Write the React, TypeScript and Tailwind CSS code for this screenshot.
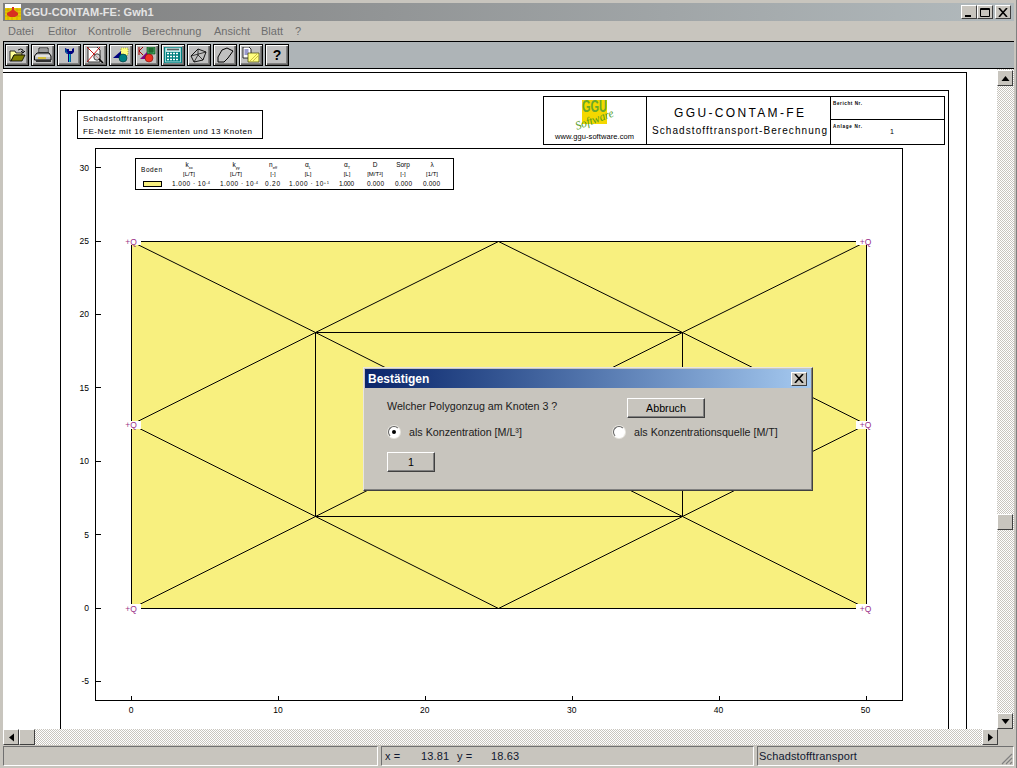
import React from 'react'

const UI = "font-['Liberation_Sans',Arial,sans-serif]"
const raised = 'border border-t-white border-l-white border-r-[#404040] border-b-[#404040] bg-[#c8c5be]'
const checker = '[background:repeating-conic-gradient(#ffffff_0_25%,#c8c5be_0_50%)_0_0/2px_2px]'

const menu = [
  { label: 'Datei', cls: 'w-[40px]' },
  { label: 'Editor', cls: 'w-[40px]' },
  { label: 'Kontrolle', cls: 'w-[54px]' },
  { label: 'Berechnung', cls: 'w-[72px]' },
  { label: 'Ansicht', cls: 'w-[47px]' },
  { label: 'Blatt', cls: 'w-[34px]' },
  { label: '?', cls: 'w-[12px]' },
]

const toolIcons: React.ReactNode[] = [
  // open folder
  <>
    <path d="M2 4h5l1 2h6v2H6L3 14H2z" fill="#ffff99" stroke="#000" strokeWidth="0.8" />
    <path d="M6 8h11l-3 6H3z" fill="#808000" stroke="#000" strokeWidth="0.8" />
    <path d="M10 3q3-2 5 0v2m-2-1l2 2 2-2" fill="none" stroke="#000" strokeWidth="0.9" />
  </>,
  // printer
  <>
    <path d="M5 1h9v5H5z" fill="#fff" stroke="#000" strokeWidth="0.9" />
    <path d="M6 3h7M6 5h7" stroke="#000" strokeWidth="0.8" />
    <path d="M3 6h12l2 3v4H0.5V9z" fill="#c0c0c0" stroke="#000" strokeWidth="1" />
    <path d="M2 9h14" stroke="#fff" strokeWidth="1" />
    <path d="M4 11h8" stroke="#e0c000" strokeWidth="1.4" />
    <path d="M2 13h15v2H2z" fill="#303030" />
  </>,
  // wrench
  <>
    <path d="M5 1v4l2 2h1v8h3V7h1l2-2V1l-2 1v2H9V2H7z" fill="#000080" />
    <path d="M9 7h1.5v8H9z" fill="#00c0c0" />
    <path d="M6 2v3l1.4 1H8" fill="none" stroke="#00a0b0" strokeWidth="0.8" />
  </>,
  // crossed sheet with lens
  <>
    <path d="M2 0h9l3 3v12H2z" fill="#fff" stroke="#000" strokeWidth="0.8" />
    <path d="M1 0l15 15M14 0L1 15" stroke="#c00000" strokeWidth="0.9" />
    <circle cx="11" cy="10" r="3.2" fill="#c0c0c0" fillOpacity="0.7" stroke="#404040" strokeWidth="1" />
    <path d="M13 12l4 4" stroke="#000" strokeWidth="1.6" />
  </>,
  // shapes
  <>
    <path d="M9 1h7v7H9z" fill="#ffff80" stroke="#808000" strokeWidth="0.6" strokeDasharray="1 1" />
    <path d="M1 11L9 4v7z" fill="#000080" />
    <circle cx="11" cy="11" r="4" fill="#008080" stroke="#003030" strokeWidth="0.6" />
  </>,
  // K with shapes
  <>
    <path d="M1 0v8M5 0L1 4l4 4" fill="none" stroke="#a00000" strokeWidth="1" />
    <path d="M9 0h8v7H9z" fill="#40a060" stroke="#004000" strokeWidth="0.6" />
    <path d="M10 2h6M10 4h6M12 1v5M14 1v5" stroke="#003000" strokeWidth="0.6" />
    <path d="M2 12l7-7v7z" fill="#800080" />
    <circle cx="11" cy="11" r="4" fill="#f03020" stroke="#600000" strokeWidth="0.5" />
  </>,
  // calculator
  <>
    <rect x="0.5" y="0" width="17" height="16" fill="#c0e8e8" stroke="#008080" strokeWidth="1.4" />
    <path d="M3 2.5h12" stroke="#606060" strokeWidth="1.6" />
    <path d="M2 5h14v9.5H2z" fill="#008080" />
    <path d="M3 6.5h12M3 9.5h12M3 12.5h12" stroke="#fff" strokeWidth="1.4" strokeDasharray="2 1" />
  </>,
  // mesh polygon
  <>
    <path d="M1 9L8 2l8 3-3 8-9 2z" fill="none" stroke="#000" strokeWidth="0.9" />
    <path d="M1 9l15-4M4 15l4-7 5 5M8 2v6" fill="none" stroke="#000" strokeWidth="0.7" />
  </>,
  // polygon
  <path d="M2 10L6 3l5-2 6 3-5 7-4 4H2z" fill="none" stroke="#000" strokeWidth="1" />,
  // sheet and folder
  <>
    <path d="M1 0h6l2 2v9H1z" fill="#fff" stroke="#000" strokeWidth="0.8" />
    <path d="M2.5 3h4M2.5 5h4M2.5 7h4" stroke="#000080" strokeWidth="0.8" />
    <path d="M6 6h11v9H6z" fill="#ffff80" stroke="#404000" strokeWidth="0.7" />
    <path d="M8 14l7-7M11 14l5-5" stroke="#d0c040" strokeWidth="1" />
  </>,
]

function ToolButton({ children }: { children: React.ReactNode }) {
  return (
    <div className="w-[24px] h-[22px] border border-black bg-[#c0c0c0] shadow-[inset_1px_1px_0_#fff,inset_-1px_-1px_0_#606060,inset_-2px_-2px_0_#808080] flex items-center justify-center">
      {children}
    </div>
  )
}

function WinButton({ children }: { children: React.ReactNode }) {
  return (
    <div className={`w-[16px] h-[14px] ${raised} flex items-center justify-center`}>
      <svg width="10" height="9" viewBox="0 0 10 9">{children}</svg>
    </div>
  )
}

function ScrollArrow({ d, className = 'w-[16px] h-[16px]' }: { d: string; className?: string }) {
  return (
    <div className={`${className} ${raised} flex items-center justify-center shrink-0`}>
      <svg width="9" height="9" viewBox="0 0 9 9">
        <path d={d} fill="#000" />
      </svg>
    </div>
  )
}

function Radio({ checked }: { checked?: boolean }) {
  return (
    <div className="w-[12px] h-[12px] rounded-full bg-white border border-t-[#606060] border-l-[#606060] border-r-white border-b-white shadow-[0_0_0_1px_#e8e6e0] flex items-center justify-center shrink-0">
      {checked && <div className="w-[4px] h-[4px] rounded-full bg-black" />}
    </div>
  )
}

function DialogButton({ label, className }: { label: string; className: string }) {
  return (
    <div className={`${className} h-[20px] border border-t-white border-l-white border-r-[#404040] border-b-[#404040] shadow-[inset_-1px_-1px_0_#808080] flex items-center justify-center text-[10.7px] text-black`}>
      {label}
    </div>
  )
}

const FONT = 'Liberation Sans, Arial, sans-serif'

function T({
  x,
  y,
  size,
  w,
  anchor = 'start',
  color = '#000',
  weight,
  children,
}: {
  x: number
  y: number
  size: number
  w?: number
  anchor?: 'start' | 'middle' | 'end'
  color?: string
  weight?: number
  children: React.ReactNode
}) {
  return (
    <text
      x={x}
      y={y}
      fontSize={size}
      fontFamily={FONT}
      textAnchor={anchor}
      fill={color}
      fontWeight={weight}
      textLength={w}
      lengthAdjust={w ? 'spacing' : undefined}
    >
      {children}
    </text>
  )
}

const sub = (s: string) => (
  <tspan fontSize="4" dy="1.5">
    {s}
  </tspan>
)
const sup = (s: string) => (
  <tspan fontSize="4" dy="-2">
    {s}
  </tspan>
)

const legendCols: { cx: number; head: React.ReactNode; unit: string; val: React.ReactNode; vx: number; vw: number }[] = [
  { cx: 189, head: <>k{sub('xx')}</>, unit: '[L/T]', val: <>1.000 · 10{sup('-4')}</>, vx: 172, vw: 38 },
  { cx: 236, head: <>k{sub('yy')}</>, unit: '[L/T]', val: <>1.000 · 10{sup('-4')}</>, vx: 220, vw: 38 },
  { cx: 273, head: <>n{sub('eff')}</>, unit: '[-]', val: '0.20', vx: 265, vw: 15 },
  { cx: 308, head: <>α{sub('L')}</>, unit: '[L]', val: <>1.000 · 10{sup('+1')}</>, vx: 289, vw: 40 },
  { cx: 347, head: <>α{sub('T')}</>, unit: '[L]', val: '1.000', vx: 339, vw: 15 },
  { cx: 375, head: 'D', unit: '[M/T²]', val: '0.000', vx: 367, vw: 17 },
  { cx: 403, head: 'Sorp', unit: '[-]', val: '0.000', vx: 395, vw: 17 },
  { cx: 432, head: 'λ', unit: '[1/T]', val: '0.000', vx: 423, vw: 17 },
]

const px = (v: number) => 131 + v * 14.69
const py = (v: number) => 608 - v * 14.68
// snap to the pixel centre so the outlines land on the same row and column as the mesh nodes
const sx = (v: number) => Math.round(px(v)) + 0.5
const sy = (v: number) => Math.floor(py(v)) + 0.5

const mesh: [number, number, number, number][] = [
  [0, 25, 12.5, 18.75],
  [12.5, 18.75, 25, 12.5],
  [25, 12.5, 37.5, 6.25],
  [37.5, 6.25, 50, 0],
  [50, 25, 37.5, 18.75],
  [37.5, 18.75, 25, 12.5],
  [25, 12.5, 12.5, 6.25],
  [12.5, 6.25, 0, 0],
  [25, 25, 12.5, 18.75],
  [25, 25, 37.5, 18.75],
  [0, 12.5, 12.5, 18.75],
  [0, 12.5, 12.5, 6.25],
  [25, 0, 12.5, 6.25],
  [25, 0, 37.5, 6.25],
  [50, 12.5, 37.5, 18.75],
  [50, 12.5, 37.5, 6.25],
]

const sources: [number, number][] = [
  [0, 25],
  [50, 25],
  [0, 12.5],
  [50, 12.5],
  [0, 0],
  [50, 0],
]

function Drawing() {
  return (
    <svg className="block w-[995px] h-[660px]" viewBox="3 69 995 660" shapeRendering="crispEdges">
      <path d="M3 72.5H966.5V729M60.5 729V90.5H948.5V729" fill="none" stroke="#000" />
      {/* title block */}
      <path d="M543.5 96.5H944.5V144.5H543.5zM646.5 96.5V144.5M830.5 96.5V144.5M830.5 119.5H944.5" fill="none" stroke="#000" />
      <rect x="582" y="100" width="25" height="24" fill="#f4d800" />
      <g shapeRendering="auto">
        <text x="594.5" y="112" fontSize="16" fontWeight={700} fontFamily={FONT} fill="#6aa82a" textAnchor="middle" textLength="25" lengthAdjust="spacingAndGlyphs">
          GGU
        </text>
        <text
          x="577"
          y="130"
          fontSize="12"
          fontStyle="italic"
          fontFamily="Liberation Serif, serif"
          fill="#4f9a20"
          textLength="40"
          lengthAdjust="spacingAndGlyphs"
          transform="rotate(-20 577 130)"
        >
          Software
        </text>
        <T x={555} y={138.5} size={7.5} w={79}>www.ggu-software.com</T>
        <T x={674} y={117} size={12} w={130}>GGU-CONTAM-FE</T>
        <T x={652} y={134} size={10} w={175}>Schadstofftransport-Berechnung</T>
        <T x={833} y={105} size={4.6} w={29} weight={700}>Bericht Nr.</T>
        <T x={833} y={128} size={4.6} w={29} weight={700}>Anlage Nr.</T>
        <T x={890} y={134} size={7}>1</T>

        <T x={83} y={121} size={8} w={80}>Schadstofftransport</T>
        <T x={83} y={134} size={8} w={169}>FE-Netz mit 16 Elementen und 13 Knoten</T>
      </g>
      <rect x="77.5" y="110.5" width="185" height="28" fill="none" stroke="#000" />

      {/* plot */}
      <rect x="95.5" y="148.5" width="807" height="552" fill="none" stroke="#000" />
      <rect x={sx(0)} y={sy(25)} width={sx(50) - sx(0)} height={sy(0) - sy(25)} fill="#f8f07f" stroke="#000" />
      <g shapeRendering="auto" stroke="#000" strokeWidth="1">
        {mesh.map(([a, b, c, d], i) => (
          <line key={i} x1={sx(a)} y1={sy(b)} x2={sx(c)} y2={sy(d)} />
        ))}
      </g>
      <rect x={sx(12.5)} y={sy(18.75)} width={sx(37.5) - sx(12.5)} height={sy(6.25) - sy(18.75)} fill="none" stroke="#000" />
      {sources.map(([a, b], i) => (
        <g key={i}>
          <rect x={px(a) - (a === 0 ? 9 : 10)} y={py(b) - 4} width="19" height="8" fill="#fff" />
          <g shapeRendering="auto">
            <T x={px(a)} y={py(b) + 3.5} size={8.5} anchor="middle" color="#9a2f88">+Q</T>
          </g>
        </g>
      ))}

      {/* axes */}
      {[30, 25, 20, 15, 10, 5, 0, -5].map((v) => (
        <g key={v}>
          <line x1="95" x2="101" y1={sy(v)} y2={sy(v)} stroke="#000" />
          <g shapeRendering="auto">
            <T x={89} y={py(v) + 3} size={8.5} anchor="end">{v}</T>
          </g>
        </g>
      ))}
      {[0, 10, 20, 30, 40, 50].map((v) => (
        <g key={v}>
          <line y1="696" y2="700" x1={sx(v)} x2={sx(v)} stroke="#000" />
          <g shapeRendering="auto">
            <T x={px(v)} y={713} size={8.5} anchor="middle">{v}</T>
          </g>
        </g>
      ))}

      {/* legend */}
      <rect x="135.5" y="158.5" width="318" height="31" fill="#fff" stroke="#000" />
      <rect x="143.5" y="181.5" width="18" height="5" fill="#f8f07f" stroke="#000" />
      <g shapeRendering="auto">
        <T x={141} y={171.5} size={6.5} w={21}>Boden</T>
        {legendCols.map((c, i) => (
          <g key={i}>
            <T x={c.cx} y={167} size={6.5} anchor="middle">{c.head}</T>
            <T x={c.cx} y={176} size={6} anchor="middle">{c.unit}</T>
            <T x={c.vx} y={185.5} size={6.5} w={c.vw}>{c.val}</T>
          </g>
        ))}
      </g>
    </svg>
  )
}

export default function App() {
  return (
    <div className={`${UI} relative w-[1017px] h-[768px] overflow-hidden bg-[#c8c5be] pt-[3px] pl-[3px] pr-[2px] pb-[2px] flex flex-col border-r border-r-[#808080]`}>
      {/* title bar */}
      <div className="h-[18px] shrink-0 flex items-center bg-gradient-to-r from-[#7f7f7f] to-[#b2babd] pl-[2px] pr-[3px]">
        <svg width="16" height="16" viewBox="0 0 16 16" className="shrink-0">
          <rect width="16" height="4" fill="#fff" />
          <rect y="4" width="16" height="12" fill="#e8c800" />
          <path d="M0 6h16M0 9h16M0 12h16M3 4v12M7 4v12M12 4v12" stroke="#b09000" strokeWidth="0.5" />
          <path d="M7 3h2v3l4 3v2l-3 2H5l-3-2V9l5-3z" fill="#d83020" />
        </svg>
        <span className="ml-[2px] text-[11px] font-bold text-[#e4e4e4] whitespace-nowrap">GGU-CONTAM-FE: Gwh1</span>
        <div className="ml-auto flex">
          <WinButton>
            <path d="M1 7h6v2H1z" fill="#000" />
          </WinButton>
          <WinButton>
            <path d="M0.5 0.5h9v8h-9zM0.5 1.5h9" fill="none" stroke="#000" />
          </WinButton>
          <div className="w-[2px]" />
          <WinButton>
            <path d="M1 0l8 9M9 0L1 9" stroke="#000" strokeWidth="1.6" />
          </WinButton>
        </div>
      </div>

      {/* menu */}
      <div className="h-[20px] shrink-0 flex items-center pl-[5px] text-[11px] text-[#6e6e6e]">
        {menu.map((m) => (
          <span key={m.label} className={m.cls}>
            {m.label}
          </span>
        ))}
      </div>

      {/* toolbar */}
      <div className="h-[28px] shrink-0 flex items-center gap-[2px] pl-[1px] bg-[#aeb4b7] border-y border-black border-l">
        {toolIcons.map((icon, i) => (
          <ToolButton key={i}>
            <svg width="18" height="16" viewBox="0 0 18 16">
              {icon}
            </svg>
          </ToolButton>
        ))}
        <ToolButton>
          <span className="text-[14px] font-bold text-black leading-none">?</span>
        </ToolButton>
      </div>

      {/* document */}
      <div className="h-[660px] shrink-0 flex">
        <div className="w-[995px] h-[660px] bg-white overflow-hidden">
          <Drawing />
        </div>
        <div className={`w-[17px] flex flex-col pt-[1px] ${checker}`}>
          <ScrollArrow d="M4.5 2L8.5 7H0.5z" />
          <div className="flex-1 flex flex-col">
            <div className="h-[428px]" />
            <div className={`h-[16px] w-[16px] ${raised}`} />
          </div>
          <ScrollArrow d="M0.5 2H8.5L4.5 7z" />
        </div>
      </div>

      {/* horizontal scrollbar */}
      <div className="h-[16px] shrink-0 flex">
        <div className={`w-[995px] flex ${checker}`}>
          <ScrollArrow d="M2 4.5L7 0.5V8.5z" />
          <div className={`w-[16px] h-[16px] ${raised}`} />
          <div className="flex-1" />
          <ScrollArrow d="M2 0.5L7 4.5L2 8.5z" />
        </div>
      </div>

      {/* status bar */}
      <div className="h-[20px] mt-[1px] shrink-0 flex gap-[3px] text-[11px] tracking-[0.15px] text-[#101830]">
        <div className="w-[375px] border border-t-[#707070] border-l-[#707070] border-r-white border-b-white" />
        <div className="w-[373px] flex items-center pl-[3px] border border-t-[#707070] border-l-[#707070] border-r-white border-b-white">
          <span className="w-[36px]">x =</span>
          <span className="w-[36px]">13.81</span>
          <span className="w-[34px]">y =</span>
          <span>18.63</span>
        </div>
        <div className="flex-1 flex items-center pl-[1px] border border-t-[#707070] border-l-[#707070] border-r-white border-b-white relative">
          Schadstofftransport
          <svg width="12" height="12" viewBox="0 0 12 12" className="absolute right-0 bottom-0">
            <path d="M11 1L1 11M11 5L5 11M11 9L9 11" stroke="#808080" strokeWidth="1.2" />
          </svg>
        </div>
      </div>

      {/* dialog */}
      <div className="absolute left-[363px] top-[367px] w-[450px] h-[124px] bg-[#c8c5be] border border-t-[#e8e6e0] border-l-[#e8e6e0] border-r-[#404040] border-b-[#404040] shadow-[inset_-1px_-1px_0_#808080] p-[1px] flex flex-col">
        <div className="h-[19px] shrink-0 flex items-center pl-[3px] pr-[4px] bg-gradient-to-r from-[#0a246a] to-[#a6caf0]">
          <span className="text-[12px] font-bold text-white">Bestätigen</span>
          <div className="ml-auto">
            <WinButton>
              <path d="M1 0l8 9M9 0L1 9" stroke="#000" strokeWidth="1.6" />
            </WinButton>
          </div>
        </div>
        <div className="flex-1 pl-[22px] text-[10.7px] text-[#202020]">
          <div className="flex items-start h-[32px] pt-[10px]">
            <span className="w-[240px] leading-[16px]">Welcher Polygonzug am Knoten 3 ?</span>
            <DialogButton label="Abbruch" className="w-[78px]" />
          </div>
          <div className="flex items-center h-[20px] mt-[2px]">
            <div className="w-[225px] flex items-center gap-[9px] pl-[1px]">
              <Radio checked />
              <span>als Konzentration [M/L³]</span>
            </div>
            <div className="flex items-center gap-[9px] pl-[1px]">
              <Radio />
              <span>als Konzentrationsquelle [M/T]</span>
            </div>
          </div>
          <DialogButton label="1" className="w-[48px] mt-[10px]" />
        </div>
      </div>
    </div>
  )
}
